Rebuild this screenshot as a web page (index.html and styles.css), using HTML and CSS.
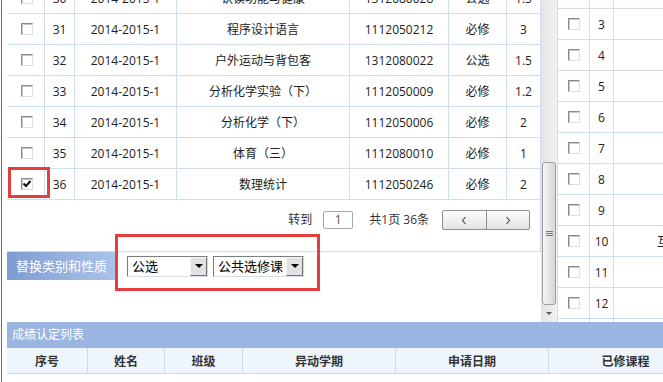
FILE: index.html
```html
<!DOCTYPE html>
<html lang="zh-CN">
<head>
  <meta charset="UTF-8" />
  <title>成绩认定</title>
  <link rel="stylesheet" href="styles.css">
</head>
<body>
  <div class="frame">
    <div class="top">
      <div class="main-pane">
        <div class="grid">
          <div class="row">
            <div><span class="cb"></span></div><div>30</div><div>2014-2015-1</div><div>认读功能与健康</div><div>1312080028</div><div>公选</div><div>1.5</div>
          </div>
          <div class="row">
            <div><span class="cb"></span></div><div>31</div><div>2014-2015-1</div><div>程序设计语言</div><div>1112050212</div><div>必修</div><div>3</div>
          </div>
          <div class="row">
            <div><span class="cb"></span></div><div>32</div><div>2014-2015-1</div><div>户外运动与背包客</div><div>1312080022</div><div>公选</div><div>1.5</div>
          </div>
          <div class="row">
            <div><span class="cb"></span></div><div>33</div><div>2014-2015-1</div><div>分析化学实验（下）</div><div>1112050009</div><div>必修</div><div>1.2</div>
          </div>
          <div class="row">
            <div><span class="cb"></span></div><div>34</div><div>2014-2015-1</div><div>分析化学（下）</div><div>1112050006</div><div>必修</div><div>2</div>
          </div>
          <div class="row">
            <div><span class="cb"></span></div><div>35</div><div>2014-2015-1</div><div>体育（三）</div><div>1112080010</div><div>必修</div><div>1</div>
          </div>
          <div class="row">
            <div><span class="cb checked"><svg width="10" height="10" viewBox="0 0 10 10"><polyline points="1.5,4.5 4,7 8.5,2" fill="none" stroke="#111" stroke-width="2"/></svg></span></div><div>36</div><div>2014-2015-1</div><div>数理统计</div><div>1112050246</div><div>必修</div><div>2</div>
          </div>

          <div class="pager">
            <span class="pager-text">转到</span>
            <span class="page-input">1</span>
            <span class="pager-text total">共1页 36条</span>
            <span class="page-btns">
              <span class="page-btn"><svg width="6" height="9" viewBox="0 0 6 9"><polyline points="4.5,1 1.5,4.5 4.5,8" fill="none" stroke="#444" stroke-width="1.1"/></svg></span>
              <span class="page-btn"><svg width="6" height="9" viewBox="0 0 6 9"><polyline points="1.5,1 4.5,4.5 1.5,8" fill="none" stroke="#444" stroke-width="1.1"/></svg></span>
            </span>
          </div>
        </div>

        <div class="swap">
          <div class="swap-label">替换类别和性质</div>
          <div class="sel sel-type"><span class="sel-text">公选</span><span class="sel-btn"><i></i></span></div>
          <div class="sel sel-kind"><span class="sel-text">公共选修课</span><span class="sel-btn"><i></i></span></div>
        </div>

        <div class="mark mark-cb"></div>
        <div class="mark mark-sel"></div>
      </div>

      <div class="vscroll">
        <div class="track"></div>
        <div class="thumb"><span class="grip"></span></div>
        <div class="arrow-down"><i></i></div>
      </div>

      <div class="side">
        <div class="side-grid">
          <div class="side-row"><div><span class="cb"></span></div><div>2</div><div></div></div>
          <div class="side-row"><div><span class="cb"></span></div><div>3</div><div></div></div>
          <div class="side-row"><div><span class="cb"></span></div><div>4</div><div></div></div>
          <div class="side-row"><div><span class="cb"></span></div><div>5</div><div></div></div>
          <div class="side-row"><div><span class="cb"></span></div><div>6</div><div></div></div>
          <div class="side-row"><div><span class="cb"></span></div><div>7</div><div></div></div>
          <div class="side-row"><div><span class="cb"></span></div><div>8</div><div></div></div>
          <div class="side-row"><div><span class="cb"></span></div><div>9</div><div></div></div>
          <div class="side-row"><div><span class="cb"></span></div><div>10</div><div class="side-name">互换课程</div></div>
          <div class="side-row"><div><span class="cb"></span></div><div>11</div><div></div></div>
          <div class="side-row"><div><span class="cb"></span></div><div>12</div><div></div></div>
          <div class="side-row"><div><span class="cb"></span></div><div>13</div><div></div></div>
        </div>
      </div>
    </div>

    <div class="list-bar">成绩认定列表</div>
    <div class="list-head">
      <div>序号</div>
      <div>姓名</div>
      <div>班级</div>
      <div>异动学期</div>
      <div>申请日期</div>
      <div>已修课程</div>
    </div>
  </div>
</body>
</html>
```

FILE: styles.css
```css
* {
  box-sizing: border-box;
}

body {
  margin: 0;
  width: 663px;
  height: 382px;
  overflow: hidden;
  background: #fff;
  font-family: "Open Sans", "Noto Sans CJK SC", sans-serif;
  font-size: 12px;
  color: #222;
}

.frame {
  margin-left: 1px;
  border-left: 1px solid #6f6f6f;
  padding-left: 5px;
  height: 382px;
  width: 720px;
}

.top {
  display: flex;
  height: 322px;
}

/* left grid with course rows */
.main-pane {
  position: relative;
  flex: none;
  width: 534px;
  overflow: hidden;
}

.grid {
  margin-top: -17px;
}

.row {
  display: grid;
  grid-template-columns: 38px 30px 102px 173px 99px 58px 34px;
  height: 31px;
}

.row > div,
.side-row > div {
  display: flex;
  align-items: center;
  justify-content: center;
  white-space: nowrap;
  border-right: 1px solid #cbdff0;
  border-bottom: 1px solid #cbdff0;
}

.cb {
  display: inline-flex;
  align-items: center;
  justify-content: center;
  width: 12px;
  height: 12px;
  margin-left: 2px;
  background: #fff;
  border: 1px solid;
  border-color: #8a8a8a #dedede #dedede #8a8a8a;
  box-shadow: inset 1px 1px 0 #c8c8c8;
}

.pager {
  display: flex;
  justify-content: flex-end;
  align-items: center;
  height: 52px;
  padding: 10px 10px 21px 0;
  border-right: 1px solid #cbdff0;
  border-bottom: 1px solid #cbdff0;
  color: #333;
}

.pager-text {
  line-height: 20px;
}

.page-input {
  width: 30px;
  height: 18px;
  margin-left: 11px;
  border: 1px solid #a8a8a8;
  border-radius: 2px;
  text-align: center;
  line-height: 16px;
  color: #555;
}

.total {
  margin-left: 16px;
}

.page-btns {
  display: flex;
  width: 88px;
  height: 20px;
  margin-left: 13px;
  border: 1px solid #8e8e8e;
  border-radius: 2px;
  background: linear-gradient(#fdfdfd, #e4e4e4);
}

.page-btn {
  flex: 1;
  display: flex;
  align-items: center;
  justify-content: center;
}

.page-btn + .page-btn {
  border-left: 1px solid #8e8e8e;
}

/* category / type selection */
.swap {
  display: flex;
  align-items: center;
  height: 28px;
}

.swap-label {
  width: 108px;
  height: 28px;
  padding-left: 9px;
  line-height: 28px;
  font-size: 13px;
  color: #fff;
  background: linear-gradient(to right, #7e9cd3, #abc3e9);
}

.sel {
  display: flex;
  height: 21px;
  border: 1px solid;
  border-color: #7d7d7d #d6dde6 #d6dde6 #7d7d7d;
  background: #fff;
  font-size: 13px;
  color: #000;
}

.sel-type {
  width: 81px;
  margin-left: 12px;
}

.sel-kind {
  width: 91px;
  margin-left: 5px;
}

.sel-text {
  flex: 1;
  padding-left: 4px;
  line-height: 19px;
  white-space: nowrap;
  overflow: hidden;
}

.sel-btn {
  display: flex;
  align-items: center;
  justify-content: center;
  width: 17px;
  background: #e2e2e2;
  border: 1px solid;
  border-color: #f6f6f6 #6e6e6e #6e6e6e #f6f6f6;
}

.sel-btn i {
  width: 0;
  height: 0;
  border-left: 4px solid transparent;
  border-right: 4px solid transparent;
  border-top: 4px solid #000;
}

/* red annotation boxes */
.mark {
  position: absolute;
  border: 3px solid #e43e3e;
}

.mark-cb {
  left: 1px;
  top: 167px;
  width: 42px;
  height: 31px;
}

.mark-sel {
  left: 108px;
  top: 234px;
  width: 205px;
  height: 57px;
}

/* scrollbar */
.vscroll {
  flex: none;
  width: 16px;
  display: flex;
  flex-direction: column;
  background: linear-gradient(to right, #e4e4e4, #f1f1f1);
}

.track {
  height: 162px;
}

.thumb {
  display: flex;
  align-items: center;
  justify-content: center;
  height: 143px;
  margin: 0 1px;
  border: 1px solid #9d9d9d;
  border-radius: 3px;
  background: linear-gradient(to right, #f6f6f6, #d6d6d6);
}

.grip {
  width: 7px;
  height: 5px;
  border-top: 1px solid #777;
  border-bottom: 1px solid #777;
  background: linear-gradient(#777, #777) center / 100% 1px no-repeat;
}

.arrow-down {
  display: flex;
  flex: 1;
  align-items: center;
  justify-content: center;
}

.arrow-down i {
  width: 0;
  height: 0;
  border-left: 3px solid transparent;
  border-right: 3px solid transparent;
  border-top: 3px solid #555;
}

/* right list */
.side {
  flex: 1;
  overflow: hidden;
  border-left: 1px solid #cbdff0;
}

.side-grid {
  margin-top: -22px;
}

.side-row {
  display: grid;
  grid-template-columns: 32px 24px 200px;
  height: 31px;
}

.side-row .cb {
  margin-left: 0;
}

.side-row > div.side-name {
  justify-content: flex-start;
  padding-left: 43px;
}

/* bottom list */
.list-bar {
  height: 26px;
  padding-left: 5px;
  line-height: 26px;
  color: #fff;
  background: #9ab5df;
}

.list-head {
  display: grid;
  grid-template-columns: 81px 77px 78px 153px 153px 154px;
  height: 26px;
  background: #eef5fc;
  border-bottom: 1px solid #c8dcee;
}

.list-head div {
  display: flex;
  align-items: center;
  justify-content: center;
  border-right: 1px solid #c8dcee;
  font-weight: bold;
  color: #333;
}
```
